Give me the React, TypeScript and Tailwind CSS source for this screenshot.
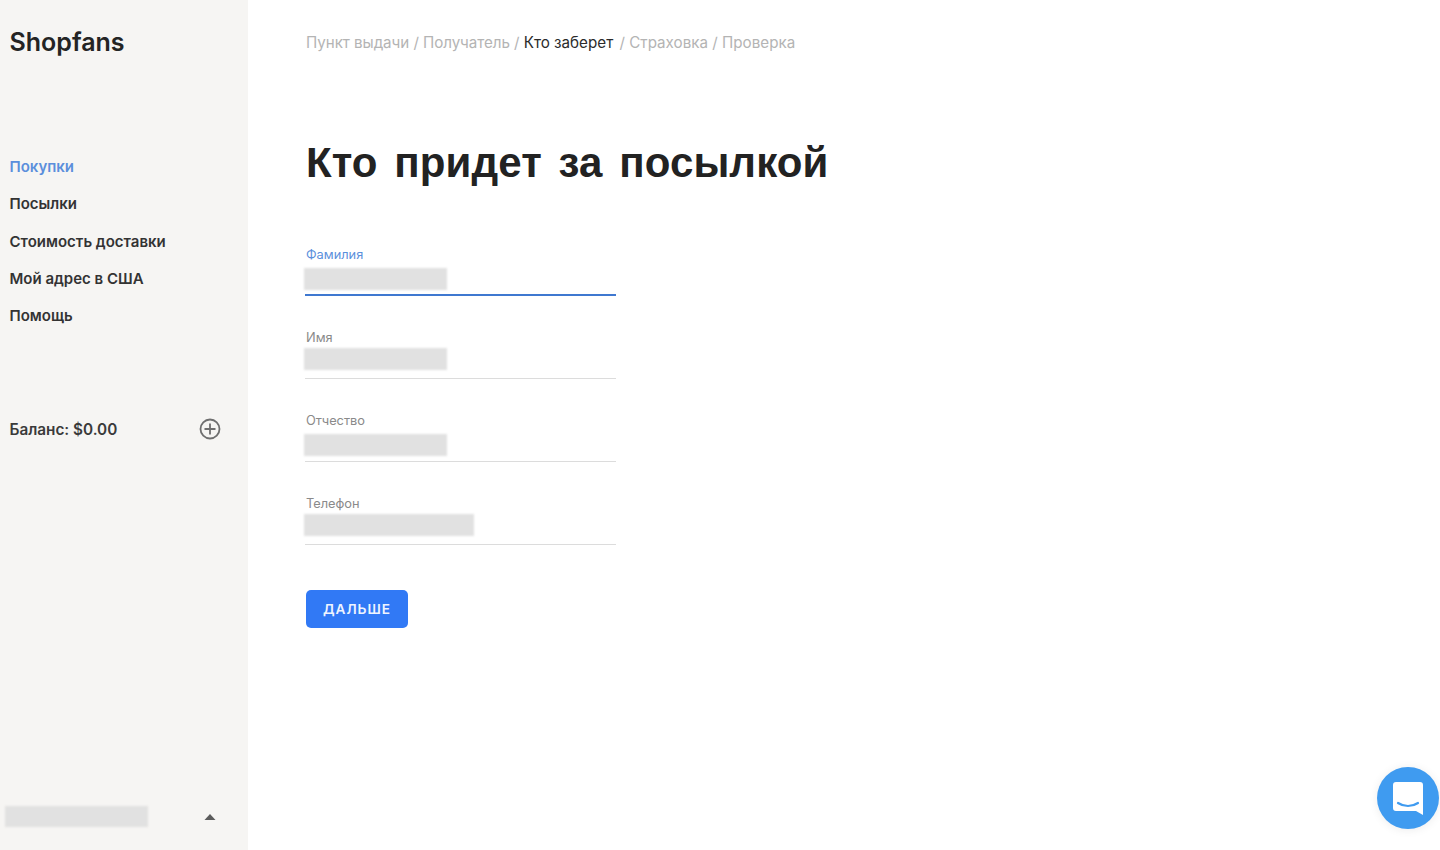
import React from "react";

const nav = ["Покупки", "Посылки", "Стоимость доставки", "Мой адрес в США", "Помощь"];

function Field({ label, active, barClass, mb }: { label: string; active?: boolean; barClass: string; mb: string }) {
  return (
    <div className={`w-[311px] ${mb}`}>
      <div className={`text-[12.8px] leading-[17px] ${active ? "text-[#5b8fdc]" : "text-[#8a8a8a]"}`}>{label}</div>
      <div className={`-ml-px mr-px flex h-[33px] items-center ${active ? "border-b-2 border-[#3f78d0]" : "border-b border-[#dcdcdc]"}`}>
        <div className={`${barClass} -ml-px h-[22px] bg-[#e1e1e1] blur-[1px]`} />
      </div>
    </div>
  );
}

export default function App() {
  return (
    <div className="relative flex h-[850px] w-[1440px] overflow-hidden bg-white font-['Inter','Noto_Sans',sans-serif] text-[#262626]">
      <aside className="flex h-full w-[248px] shrink-0 flex-col bg-[#f6f5f3] pl-[9.5px] pr-[27px]">
        <div className="mt-[26px] h-[32px] text-[25px] font-semibold leading-[32px] text-[#242424]">Shopfans</div>
        <nav className="mt-[99px] flex flex-col gap-[17.3px]">
          {nav.map((item, i) => (
            <div key={item} className={`h-[20px] text-[15px] font-semibold leading-[20px] ${i === 0 ? "text-[#5b8fdc]" : "text-[#333333]"}`}>
              {item}
            </div>
          ))}
        </nav>
        <div className="mt-[91px] flex h-[24px] items-center justify-between">
          <span className="translate-y-px text-[15.3px] font-semibold text-[#3a3a3a]">Баланс: $0.00</span>
          <svg width="22" height="22" viewBox="0 0 22 22" fill="none" stroke="#6f6f6f" strokeWidth="1.8">
            <circle cx="11" cy="11" r="9.5" />
            <path d="M11 5.5v11M5.5 11h11" />
          </svg>
        </div>
        <div className="mt-auto mb-[23px] -ml-[5px] flex items-center justify-between">
          <div className="h-[21px] w-[143px] bg-[#e1e1e1] blur-[1px]" />
          <svg width="12" height="6" viewBox="0 0 12 6" className="mr-[5px]">
            <path d="M6 0l5.5 6H.5z" fill="#5c5c5c" />
          </svg>
        </div>
      </aside>
      <main className="flex-1 pl-[58px]">
        <div className="mt-[33px] h-[20px] text-[15.2px] leading-[20px] text-[#b4b4b4]">
          <span className="tracking-[-0.07px]">Пункт выдачи / Получатель / </span>
          <span className="mr-[2px] text-[#2b2b2b]">Кто заберет</span> / Страховка / Проверка
        </div>
        <h1 className="mt-[84px] h-[52px] font-['Liberation_Sans',sans-serif] text-[42px] font-bold leading-[52px] tracking-[0.1px] [word-spacing:5px] text-[#222222]">
          Кто придет за посылкой
        </h1>
        <div className="mt-[57px] flex flex-col items-start">
          <Field label="Фамилия" active barClass="w-[143px]" mb="mb-[33px]" />
          <Field label="Имя" barClass="w-[143px] -translate-y-[3px]" mb="mb-[33px]" />
          <Field label="Отчество" barClass="w-[143px]" mb="mb-[33px]" />
          <Field label="Телефон" barClass="w-[170px] -translate-y-[3px]" mb="mb-[45px]" />
          <button className="h-[38px] w-[102px] rounded-[5px] bg-[#3179f5] text-[13.6px] font-semibold tracking-[1px] text-[#eef4ff]">
            ДАЛЬШЕ
          </button>
        </div>
      </main>
      <div className="absolute left-[1377px] top-[767px] flex h-[62px] w-[62px] items-center justify-center rounded-full bg-[#3f9bf0] shadow-[0_1px_10px_rgba(0,0,0,0.08)]">
        <svg width="30" height="33" viewBox="0 0 30 33">
          <path d="M3 0h24a3 3 0 0 1 3 3v30l-7-4H3a3 3 0 0 1-3-3V3a3 3 0 0 1 3-3z" fill="#ffffff" />
          <path d="M5 21c6 4 14 4 20 0" fill="none" stroke="#3f9bf0" strokeWidth="2.2" strokeLinecap="round" />
        </svg>
      </div>
    </div>
  );
}
